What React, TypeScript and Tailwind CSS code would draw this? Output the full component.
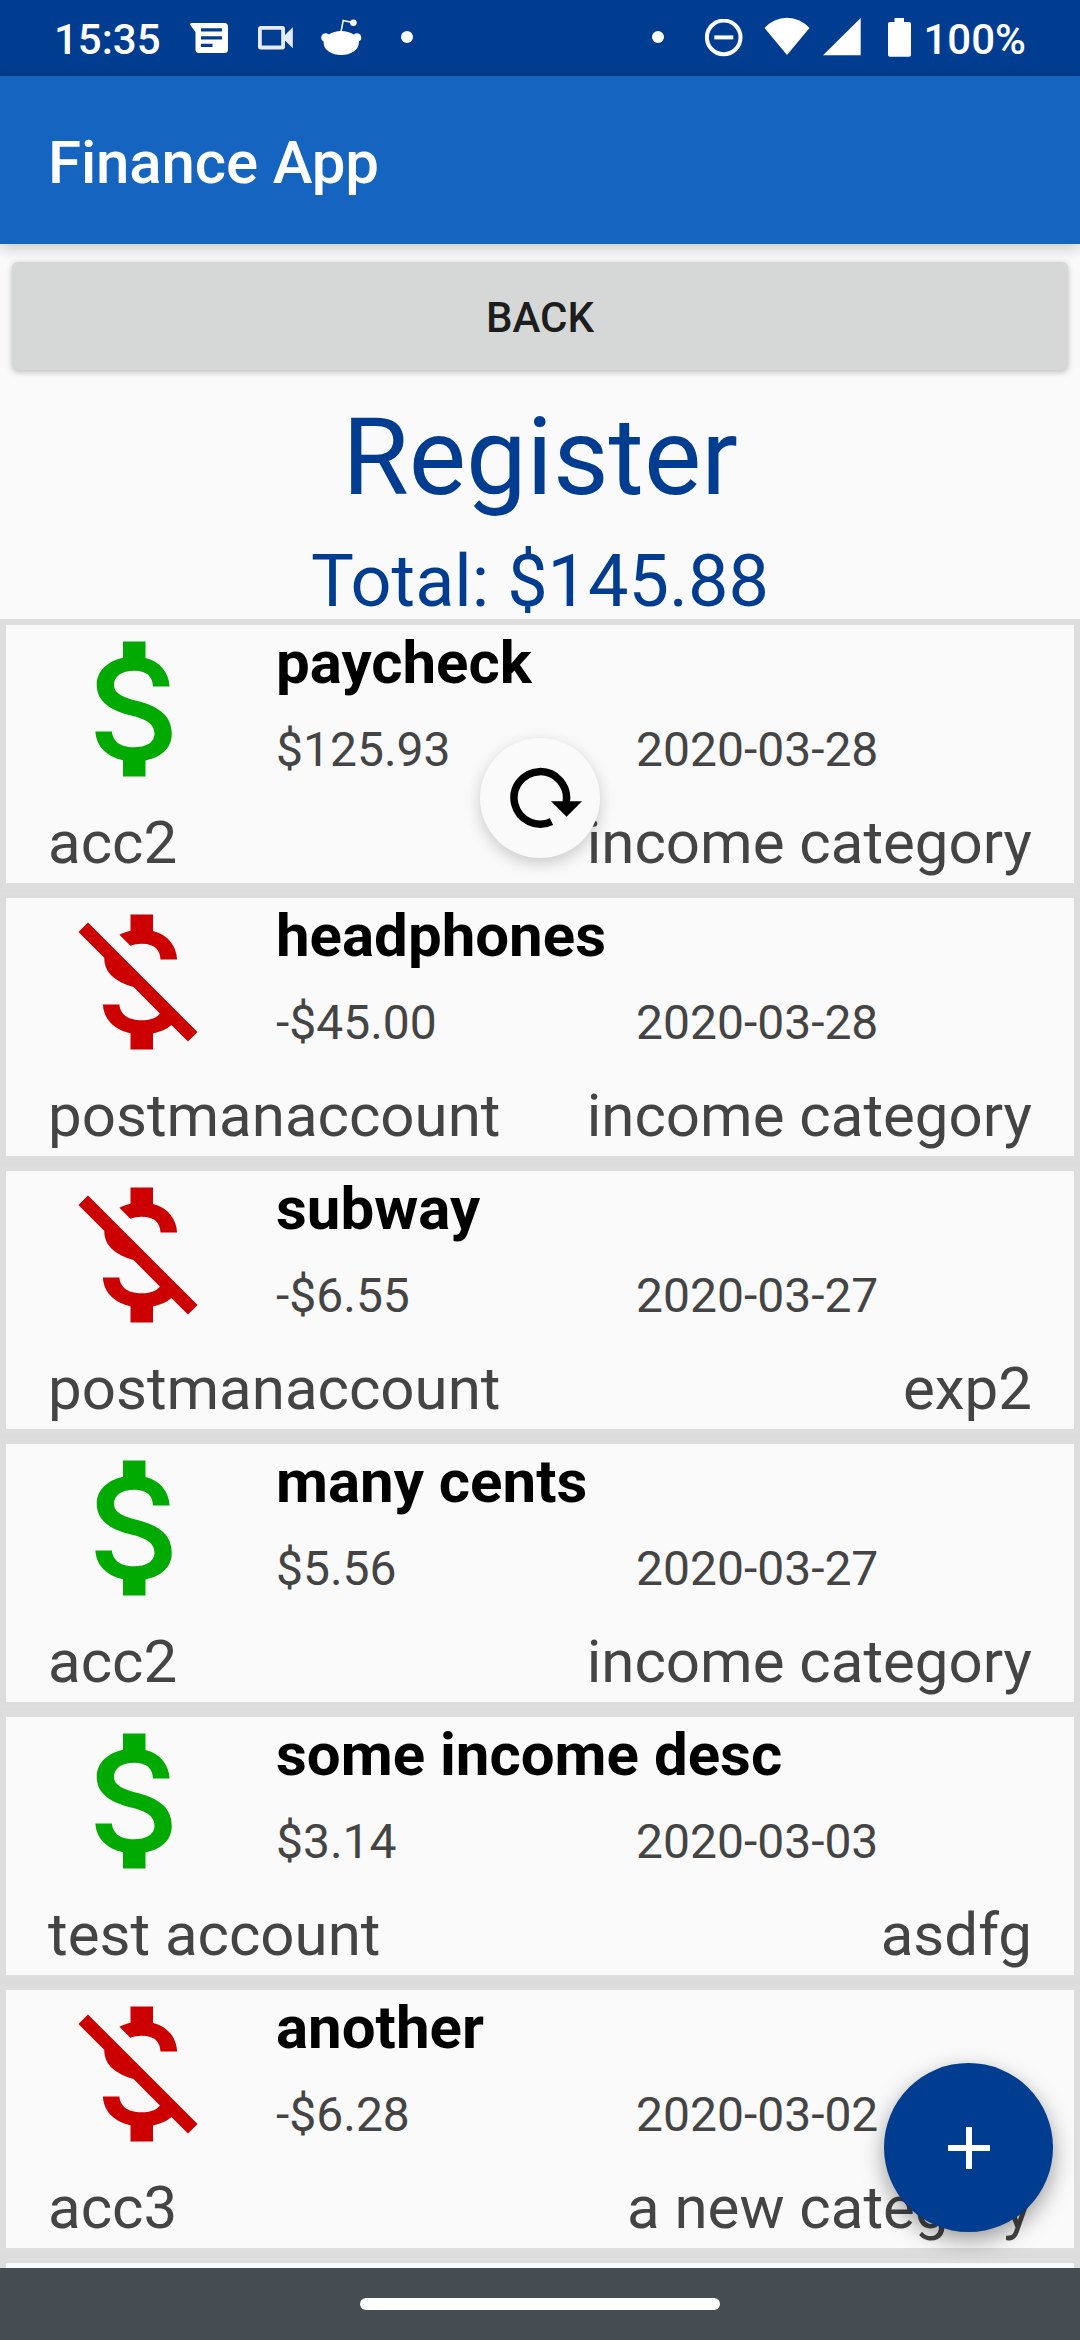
import React from "react";

type Entry = {
  description: string;
  amount: string;
  date: string;
  account: string;
  category: string;
  income: boolean;
};

const entries: Entry[] = [
  { description: "paycheck", amount: "$125.93", date: "2020-03-28", account: "acc2", category: "income category", income: true },
  { description: "headphones", amount: "-$45.00", date: "2020-03-28", account: "postmanaccount", category: "income category", income: false },
  { description: "subway", amount: "-$6.55", date: "2020-03-27", account: "postmanaccount", category: "exp2", income: false },
  { description: "many cents", amount: "$5.56", date: "2020-03-27", account: "acc2", category: "income category", income: true },
  { description: "some income desc", amount: "$3.14", date: "2020-03-03", account: "test account", category: "asdfg", income: true },
  { description: "another", amount: "-$6.28", date: "2020-03-02", account: "acc3", category: "a new category", income: false },
];

const INCOME_PATH =
  "M11.8 10.9c-2.27-.59-3-1.2-3-2.15 0-1.09 1.01-1.85 2.7-1.85 1.78 0 2.44.85 2.5 2.1h2.21c-.07-1.72-1.12-3.3-3.21-3.81V3h-3v2.16c-1.94.42-3.5 1.68-3.5 3.61 0 2.31 1.91 3.46 4.7 4.13 2.5.6 3 1.48 3 2.41 0 .69-.49 1.79-2.7 1.79-2.06 0-2.87-.92-2.98-2.1h-2.2c.12 2.19 1.76 3.42 3.68 3.83V21h3v-2.15c1.95-.37 3.5-1.5 3.5-3.55 0-2.84-2.43-3.81-4.7-4.4z";
const EXPENSE_PATH =
  "M12.5 6.9c1.78 0 2.44.85 2.5 2.1h2.21c-.07-1.72-1.12-3.3-3.21-3.81V3h-3v2.16c-.53.12-1.03.3-1.48.54l1.47 1.47c.41-.17.91-.27 1.51-.27zM5.33 4.06L4.06 5.33 7.5 8.77c0 2.08 1.56 3.21 3.91 3.91l3.51 3.51c-.34.48-1.05.91-2.42.91-2.06 0-2.87-.92-2.98-2.1h-2.2c.12 2.19 1.76 3.42 3.68 3.83V21h3v-2.15c.96-.18 1.82-.55 2.45-1.12l2.22 2.22 1.27-1.27L5.33 4.06z";

function StatusBar() {
  return (
    <div className="flex h-[76px] shrink-0 items-start bg-[#003c8f] pl-[54px] pr-[54px] text-[42px] font-medium leading-[49px] text-white">
      <span className="mt-[15px]">15:35</span>
      <svg className="ml-[29px] mt-[23px] h-[31px] w-[38px]" viewBox="0 0 38 31" fill="currentColor">
        <path fillRule="evenodd" d="M1.500 0H34.500a3.500 3.500 0 0 1 3.500 3.500V26.500a3.500 3.500 0 0 1-3.500 3.500H9a3.500 3.500 0 0 1-3.500-3.500V9L.3 2Q-.3 0 1.500 0zM11 5.200h21v3.200H11zM11 13.300h21v3.200H11zM11 20.700h11.500v3.200H11z" />
      </svg>
      <svg className="ml-[30px] mt-[26px] h-[24px] w-[36px]" viewBox="0 0 36 24" fill="none">
        <rect x="1.900" y="1.900" width="23.200" height="19.600" rx=".8" stroke="#e6ecf5" strokeWidth="3.800" />
        <path d="M26 10l8.800-8.800v21L26 13.400z" fill="#e6ecf5" />
      </svg>
      <svg className="ml-[27px] mt-[18px] h-[38px] w-[41px]" viewBox="0 0 41 38" fill="currentColor">
        <ellipse cx="20.200" cy="25" rx="17.600" ry="12" />
        <circle cx="4.600" cy="19.700" r="4.400" />
        <circle cx="35.900" cy="19.700" r="4.400" />
        <circle cx="32.400" cy="4.800" r="3.300" />
        <path d="M20 14l2.200-11.500 10 2.300" fill="none" stroke="currentColor" strokeWidth="1.500" />
      </svg>
      <span className="ml-[39px] mt-[31px] size-[12px] rounded-full bg-white" />
      <span className="ml-auto mr-[41px] mt-[31px] size-[12px] rounded-full bg-white" />
      <svg className="mr-[21px] mt-[19px] h-[38px] w-[38px]" viewBox="0 0 38 38" fill="none" stroke="white" strokeWidth="4">
        <circle cx="18.700" cy="18.400" r="16.800" />
        <path d="M9.300 18.400h19" />
      </svg>
      <svg className="mr-[13px] mt-[17px] h-[39px] w-[46px]" viewBox="0 0 46 39" fill="white">
        <path d="M.5 11A29.700 29.700 0 0 1 45.500 11L23 38z" />
      </svg>
      <svg className="mr-[27px] mt-[18px] h-[38px] w-[38px]" viewBox="0 0 38 38" fill="white">
        <path d="M37.700 0v37.300H0z" />
      </svg>
      <svg className="mr-[12px] mt-[18px] h-[39px] w-[23px]" viewBox="0 0 23 39" fill="white">
        <path d="M6.500 0h9.500v4h5q2 0 2 2v30.700q0 2-2 2H2q-2 0-2-2V6q0-2 2-2h4.500z" />
      </svg>
      <span className="mt-[15px]">100%</span>
    </div>
  );
}

function Row({ entry }: { entry: Entry }) {
  return (
    <li className="flex h-[270px] shrink-0 flex-col border-6 border-[#dddddd] bg-[#fafafa] px-[42px]">
      <div className="-mt-[6px] flex h-[180px]">
        <svg className={entry.income ? "size-[180px] shrink-0 text-[#00aa00]" : "size-[180px] shrink-0 text-[#cc0000]"} viewBox="0 0 24 24" fill="currentColor">
          <path d={entry.income ? INCOME_PATH : EXPENSE_PATH} />
        </svg>
        <div className="ml-[48px] flex grow flex-col pt-[8px]">
          <h2 className="text-[60px] font-bold leading-[71px] text-black">{entry.description}</h2>
          <div className="mt-[23px] flex text-[48px] leading-[57px]">
            <span className="w-[360px]">{entry.amount}</span>
            <span>{entry.date}</span>
          </div>
        </div>
      </div>
      <div className="mt-[8px] flex justify-between text-[60px] leading-[71px]">
        <span>{entry.account}</span>
        <span>{entry.category}</span>
      </div>
    </li>
  );
}

export default function App() {
  return (
    <div className="relative flex h-[2340px] w-[1080px] flex-col overflow-hidden bg-[#fafafa] font-['Roboto',sans-serif] text-[#444444]">
      <StatusBar />
      <header className="flex h-[168px] shrink-0 items-center bg-[#1565c0] pl-[48px] text-[60px] font-medium leading-[71px] text-white shadow-[0_4px_14px_rgba(0,0,0,0.2)]">
        <h1 className="mt-[5px] tracking-[-0.15px]">Finance App</h1>
      </header>
      <button className="mx-[12px] mt-[18px] flex h-[108px] shrink-0 items-center justify-center rounded-[6px] bg-[#d6d8d7] pt-[3px] text-[42px] font-medium leading-[49px] text-[#1d1d1d] shadow-[0_2px_6px_rgba(0,0,0,0.25)]">
        BACK
      </button>
      <h2 className="mt-[24px] text-center text-[108px] leading-[126px] text-[#003c8f]">Register</h2>
      <p className="mt-[19px] text-center text-[72px] leading-[85px] text-[#003c8f]">Total: $145.88</p>
      <ul className="-mt-[5px] flex min-h-0 grow flex-col gap-[3px] overflow-hidden bg-[#dcdcdc]">
        {entries.map((entry) => (
          <Row key={entry.description} entry={entry} />
        ))}
        <li className="h-[270px] shrink-0 border-6 border-[#dddddd] bg-[#fafafa]" />
      </ul>
      <footer className="flex h-[72px] shrink-0 items-center justify-center bg-[#454d53]">
        <div className="h-[12px] w-[360px] rounded-full bg-white" />
      </footer>
      <div className="absolute left-[480px] top-[738px] size-[120px] rounded-full bg-[#fafafa] shadow-[0_5px_16px_rgba(0,0,0,0.2)]">
        <svg className="size-[120px]" viewBox="0 0 120 120">
          <path d="M86.200 64A26.250 26.250 0 1 0 71.500 83.600" fill="none" stroke="black" strokeWidth="7.500" />
          <path d="M71 63.300h31L86.600 78.700z" fill="black" />
        </svg>
      </div>
      <button className="absolute left-[884px] top-[2063px] flex size-[169px] items-center justify-center rounded-full bg-[#003c8f] shadow-[0_8px_22px_rgba(0,0,0,0.38)]">
        <svg className="size-[42px]" viewBox="0 0 42 42" fill="white">
          <path d="M18 0h6v18h18v6H24v18h-6V24H0v-6h18z" />
        </svg>
      </button>
    </div>
  );
}
